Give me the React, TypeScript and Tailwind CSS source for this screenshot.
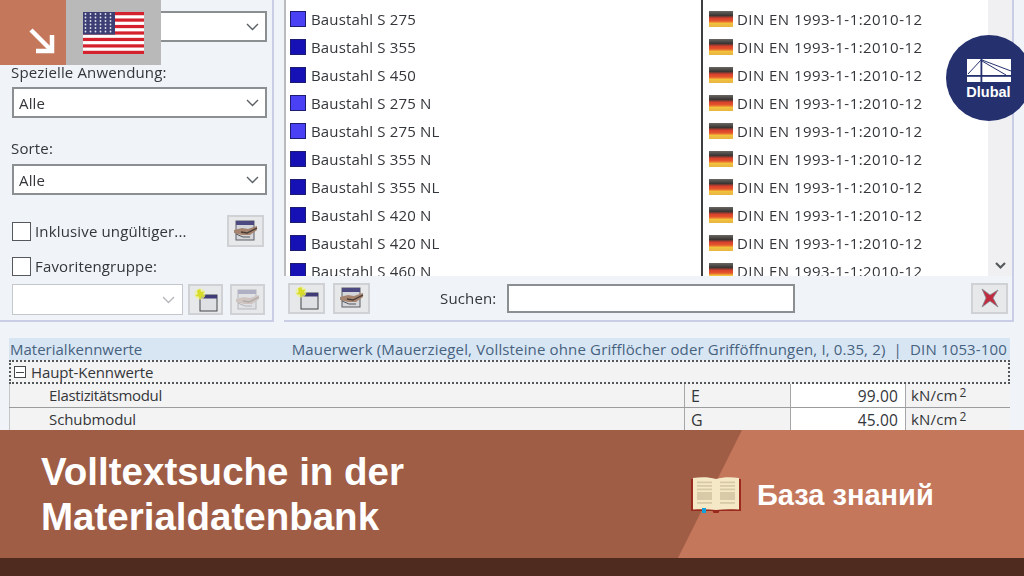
import type { FC, ReactNode } from "react";

const rows = [
  { name: "Baustahl S 275", light: true },
  { name: "Baustahl S 355", light: false },
  { name: "Baustahl S 450", light: false },
  { name: "Baustahl S 275 N", light: true },
  { name: "Baustahl S 275 NL", light: true },
  { name: "Baustahl S 355 N", light: false },
  { name: "Baustahl S 355 NL", light: false },
  { name: "Baustahl S 420 N", light: false },
  { name: "Baustahl S 420 NL", light: false },
  { name: "Baustahl S 460 N", light: false },
];

const Chevron: FC<{ muted?: boolean }> = ({ muted }) => (
  <svg width="13" height="8" viewBox="0 0 13 8" fill="none" stroke={muted ? "#b4b8bd" : "#5c6166"} strokeWidth="1.4">
    <path d="M1 1l5.5 5.5L12 1" />
  </svg>
);

const Select: FC<{ value?: string }> = ({ value }) => (
  <div className="flex h-[31px] w-[255px] shrink-0 items-center justify-between border-2 border-[#8b8f92] bg-white pl-[5px] pr-[6px]">
    <span className="pt-[1px]">{value}</span>
    <Chevron />
  </div>
);

const GermanFlag = () => (
  <div className="h-[16px] w-[24px] shrink-0 bg-[linear-gradient(#6a6664_0%,#3a3634_28%,#d8402c_45%,#e4552c_62%,#f3c13c_78%,#e6b545_100%)]" />
);

const ShakeIcon: FC<{ muted?: boolean }> = ({ muted }) => (
  <svg width="26" height="22" viewBox="0 0 26 22" className={muted ? "opacity-35" : ""}>
    <rect x="3" y="1" width="18" height="19" fill="#d4d6da" stroke="#5c5f66" />
    <rect x="3" y="1" width="18" height="4" fill="#4c4a80" />
    <path d="M1 10l8-2 6 1 9-3v4l-7 5H9l-8-2z" fill="#a58470" />
    <path d="M8 12l6 1 10-5" fill="none" stroke="#4a3c36" strokeWidth="1.3" />
    <path d="M3 14l7 3h7" fill="none" stroke="#55565a" strokeWidth="1" />
  </svg>
);

const NewIcon = () => (
  <svg width="26" height="24" viewBox="0 0 26 24">
    <rect x="7" y="7" width="17" height="16" fill="#dfe0e3" stroke="#43464a" />
    <rect x="7" y="7" width="17" height="3.5" fill="#403c78" />
    <circle cx="7" cy="6" r="5.5" fill="#eef28a" opacity=".7" />
    <path d="M7 1l1.400 3 3.100-.6-1.700 2.800L12 9l-3.300-.4L7 11.500 5.700 8.500 2 8l2.800-2L4 2.500z" fill="#d8dc28" />
  </svg>
);

const ToolButton: FC<{ children: ReactNode; className?: string }> = ({ children, className }) => (
  <div className={`flex h-[31px] w-[35px] shrink-0 items-center justify-center border-2 border-[#cfd1d4] bg-[#e6e8ea] ${className ?? ""}`}>
    {children}
  </div>
);

const CheckRow: FC<{ label: string }> = ({ label }) => (
  <div className="flex h-[19px] items-center gap-[4px] leading-[19px]">
    <div className="h-[19px] w-[19px] border border-[#55585c] bg-white" />
    <span>{label}</span>
  </div>
);

const USFlag = () => (
  <svg width="61" height="42" viewBox="0 0 61 42">
    <rect width="61" height="42" fill="#fff" />
    {[0, 2, 4, 6, 8, 10, 12].map((i) => (
      <rect key={i} y={i * 3.23} width="61" height="3.23" fill="#d5212e" />
    ))}
    <rect width="32" height="22.6" fill="#3d3f74" />
    {[2, 5.5, 9, 12.5, 16, 19.5].map((y) =>
      [2.5, 7.5, 12.5, 17.5, 22.5, 27.5].map((x) => (
        <circle key={`${x}-${y}`} cx={x} cy={y} r=".9" fill="#dfe1ec" />
      )),
    )}
  </svg>
);

const BookIcon = () => (
  <svg width="50" height="36" viewBox="0 0 50 36">
    <rect x="0" y="2" width="50" height="32" fill="#9a2a1e" />
    <path d="M21 33h8l-1.500 3h-5z" fill="#9a2a1e" />
    <path d="M2 1c8-1 16-1 23 1 7-2 15-2 23-1v31.500c-8-.5-16-.5-23 .5-7-1-15-1-23-.5z" fill="#f5e8c6" />
    <g fill="#d8caa6">
      <rect x="6" y="4.500" width="15" height="1.800" />
      <rect x="6" y="8" width="15" height="1.800" />
      <rect x="6" y="11.500" width="15" height="1.800" />
      <rect x="6" y="15" width="15" height="8" />
      <rect x="6" y="25" width="15" height="1.800" />
      <rect x="29" y="4.500" width="15" height="1.800" />
      <rect x="29" y="8" width="15" height="1.800" />
      <rect x="29" y="11.500" width="15" height="1.800" />
      <rect x="29" y="15" width="15" height="8" />
      <rect x="29" y="25" width="15" height="1.800" />
    </g>
    <rect x="11" y="31" width="4" height="5" fill="#12a0dc" />
  </svg>
);

const DlubalLogo = () => (
  <div className="absolute left-[946px] top-[35px] flex h-[86px] w-[86px] flex-col items-center rounded-full bg-[#25316f] pr-[1px] pt-[24px] tracking-normal text-white">
    <svg width="44" height="23" viewBox="0 0 44 23">
      <rect width="44" height="23" fill="#fff" />
      <rect y="16" width="44" height="1.8" fill="#25316f" />
      <rect x="13.5" width="1.8" height="23" fill="#25316f" />
      <path d="M1 15L14 1M15 1l29 11M15 2l24 14" fill="none" stroke="#25316f" strokeWidth="1" />
    </svg>
    <span className="mt-[2px] text-[14.5px] font-bold leading-[17px] [font-family:'Liberation_Sans',sans-serif]">Dlubal</span>
  </div>
);

const PropRow: FC<{ name: string; sym: string; val: string; nameClass: string }> = ({ name, sym, val, nameClass }) => (
  <div className="flex h-[24px] shrink-0 items-center border-b border-[#9a9c9e] bg-[#f3f3f3] text-[15px]">
    <div className={`flex h-full w-[675px] items-center border-l border-[#c3c5c7] pl-[39px] ${nameClass}`}>{name}</div>
    <div className="flex h-full w-[106px] items-center border-l border-[#a4a6a8] pl-[6px] text-[16px]">{sym}</div>
    <div className="flex h-full w-[115px] items-center justify-end border-l border-[#a4a6a8] bg-white pr-[7px] pt-[2px] text-[15.5px]">{val}</div>
    <div className="flex h-full flex-1 items-center border-l border-[#a4a6a8] pl-[5px]">
      kN/cm<span className="relative top-[-3px] ml-[2px] text-[12px]">2</span>
    </div>
  </div>
);

export default function App() {
  return (
    <div className="relative h-[576px] w-[1024px] overflow-hidden bg-[#f0f3f8] text-[15px] tracking-[0.15px] text-[#33363a] [font-family:'Open_Sans',sans-serif]">
      <div className="flex h-[430px] flex-col overflow-hidden blur-[0.5px]">
        <div className="flex h-[322px] shrink-0 gap-[10px]">
          {/* left filter panel */}
          <div className="flex w-[274px] shrink-0 flex-col border-b-2 border-r-2 border-[#c9cde6] pl-[12px] pt-[11px]">
            <Select />
            <div className="ml-[-1px] mt-[20px] h-[25px] leading-[20px]">Spezielle Anwendung:</div>
            <Select value="Alle" />
            <div className="ml-[-1px] mt-[20px] h-[26px] leading-[20px]">Sorte:</div>
            <Select value="Alle" />
            <div className="mt-[20px] flex h-[32px] w-[252px] items-center justify-between">
              <CheckRow label="Inklusive ungültiger..." />
              <ToolButton className="h-[32px] w-[37px]">
                <ShakeIcon />
              </ToolButton>
            </div>
            <div className="mt-[10px]">
              <CheckRow label="Favoritengruppe:" />
            </div>
            <div className="mt-[8px] flex items-center">
              <div className="flex h-[31px] w-[171px] items-center justify-end border border-[#c3c6ca] bg-white pr-[7px]">
                <Chevron muted />
              </div>
              <ToolButton className="ml-[5px]">
                <NewIcon />
              </ToolButton>
              <ToolButton className="ml-[7px] bg-[#d6d8db]">
                <ShakeIcon muted />
              </ToolButton>
            </div>
          </div>

          {/* material list */}
          <div className="mr-[10px] flex flex-1 flex-col border-b-2 border-r-2 border-[#c9cde6]">
            <div className="flex h-[276px] shrink-0 overflow-hidden bg-white">
              <div className="w-[417px] shrink-0 border-l-2 border-[#b9bbbd] pl-[4px] pt-[5px]">
                {rows.map((r) => (
                  <div key={r.name} className="flex h-[28px] items-center gap-[5px]">
                    <div className={`h-[16px] w-[16px] shrink-0 border border-[#1c1c70] ${r.light ? "bg-[#4a40f4]" : "bg-[#1511b4]"}`} />
                    <span>{r.name}</span>
                  </div>
                ))}
              </div>
              <div className="w-[287px] shrink-0 border-l-2 border-[#3c3e40] pl-[6px] pt-[5px]">
                {rows.map((r) => (
                  <div key={r.name} className="flex h-[28px] items-center gap-[4px] tracking-[0.45px]">
                    <GermanFlag />
                    <span>DIN EN 1993-1-1:2010-12</span>
                  </div>
                ))}
              </div>
              <div className="flex flex-1 items-end justify-center bg-[#f0f0f2] pb-[6px]">
                <svg width="11" height="8" viewBox="0 0 11 8" fill="none" stroke="#55585c" strokeWidth="2.2">
                  <path d="M1 1l4.500 4.500L10 1" />
                </svg>
              </div>
            </div>
            <div className="flex flex-1 items-center pl-[4px] pr-[4px]">
              <ToolButton className="w-[37px]">
                <NewIcon />
              </ToolButton>
              <ToolButton className="ml-[8px] w-[37px]">
                <ShakeIcon />
              </ToolButton>
              <span className="ml-[70px]">Suchen:</span>
              <div className="ml-[11px] h-[29px] w-[288px] border-2 border-[#8b8f92] bg-white" />
              <ToolButton className="ml-auto w-[37px]">
                <svg width="22" height="22" viewBox="0 0 22 22">
                  <path d="M3 2l8 6 8-5-5 8 5 9-8-6-8 6 4-9z" fill="#c22a3e" stroke="#7f8a90" strokeWidth=".8" />
                </svg>
              </ToolButton>
            </div>
          </div>
        </div>

        {/* material properties */}
        <div className="ml-[9px] mr-[14px] mt-[16px] flex min-h-0 flex-1 flex-col">
          <div className="flex h-[22px] shrink-0 items-center justify-between bg-[#d8e6f4] pl-[1px] pr-[3px] text-[15px] tracking-normal text-[#47627e]">
            <span>Materialkennwerte</span>
            <span className="tracking-[0.15px]">Mauerwerk (Mauerziegel, Vollsteine ohne Grifflöcher oder Grifföffnungen, I, 0.35, 2) &nbsp;|&nbsp; DIN 1053-100</span>
          </div>
          <div className="flex h-[24px] shrink-0 items-center gap-[5px] border-2 border-dotted border-[#55585b] bg-[#f3f3f3] pl-[3px] text-[15px] tracking-[-0.1px]">
            <div className="flex h-[12px] w-[12px] items-center justify-center border border-[#45484b] bg-white">
              <div className="h-[1px] w-[8px] bg-[#45484b]" />
            </div>
            <span>Haupt-Kennwerte</span>
          </div>
          <PropRow name="Elastizitätsmodul" sym="E" val="99.00" nameClass="tracking-[-0.35px]" />
          <PropRow name="Schubmodul" sym="G" val="45.00" nameClass="tracking-[-0.1px]" />
        </div>
      </div>

      {/* banner */}
      <div className="relative flex h-[128px] items-center bg-[#a05d45] pl-[41px] tracking-normal text-white [font-family:'Liberation_Sans',sans-serif]">
        <div className="absolute inset-0 bg-[#c4775b] [clip-path:polygon(742px_0,1024px_0,1024px_128px,678px_128px)]" />
        <h1 className="relative text-[38.5px] font-bold leading-[45px]">
          Volltextsuche in der
          <br />
          Materialdatenbank
        </h1>
        <div className="absolute left-[691px] top-[47px] flex items-center gap-[16px]">
          <BookIcon />
          <span className="text-[29px] font-bold leading-[34px]">База знаний</span>
        </div>
      </div>
      <div className="h-[18px] bg-[#4f2a1e]" />

      {/* overlays */}
      <div className="absolute left-0 top-0 flex h-[65px] w-[161px]">
        <div className="flex w-[66px] items-end justify-end bg-[#c4775b] pb-[10px] pr-[10px]">
          <svg width="28" height="28" viewBox="0 0 28 28" fill="none" stroke="#fff" strokeWidth="4.5">
            <path d="M3 3l21 21M8 24h16V8" />
          </svg>
        </div>
        <div className="flex flex-1 items-center justify-center bg-[#b9b9b9] pt-[1px]">
          <USFlag />
        </div>
      </div>
      <DlubalLogo />
    </div>
  );
}
